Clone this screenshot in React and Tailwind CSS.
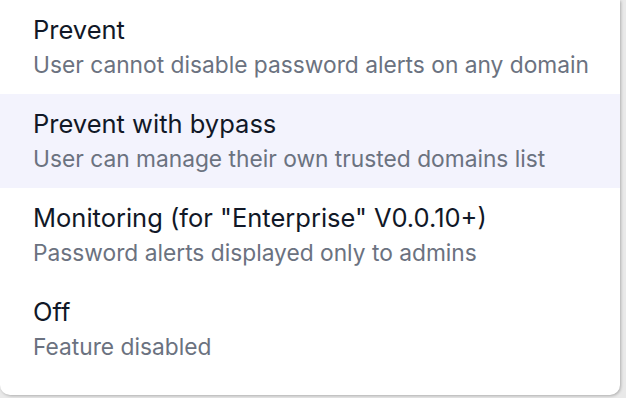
import React from 'react';

const options = [
    { title: 'Prevent', desc: 'User cannot disable password alerts on any domain' },
    { title: 'Prevent with bypass', desc: 'User can manage their own trusted domains list', active: true },
    { title: 'Monitoring (for "Enterprise" V0.0.10+)', desc: 'Password alerts displayed only to admins' },
    { title: 'Off', desc: 'Feature disabled' },
];

export default function App() {
    return (
        <div className="w-[626px] h-[398px] bg-[#e9e9e9] overflow-hidden" style={{ fontFamily: 'Inter, "Noto Sans", sans-serif' }}>
            <div className="w-[620px] h-[395px] bg-white rounded-b-[10px] shadow-[1px_1px_3px_rgba(0,0,0,0.25)] pb-[19px]">
                {options.map((opt) => (
                    <div
                        key={opt.title}
                        className={`h-[94px] px-[33px] pt-[13px] ${opt.active ? 'bg-[#f3f3fd]' : ''}`}
                    >
                        <div className="text-[25.5px] leading-[34px] text-[#111827] whitespace-nowrap">{opt.title}</div>
                        <div className="text-[22.75px] leading-[35px] text-[#6b7280] whitespace-nowrap">{opt.desc}</div>
                    </div>
                ))}
            </div>
        </div>
    );
}
